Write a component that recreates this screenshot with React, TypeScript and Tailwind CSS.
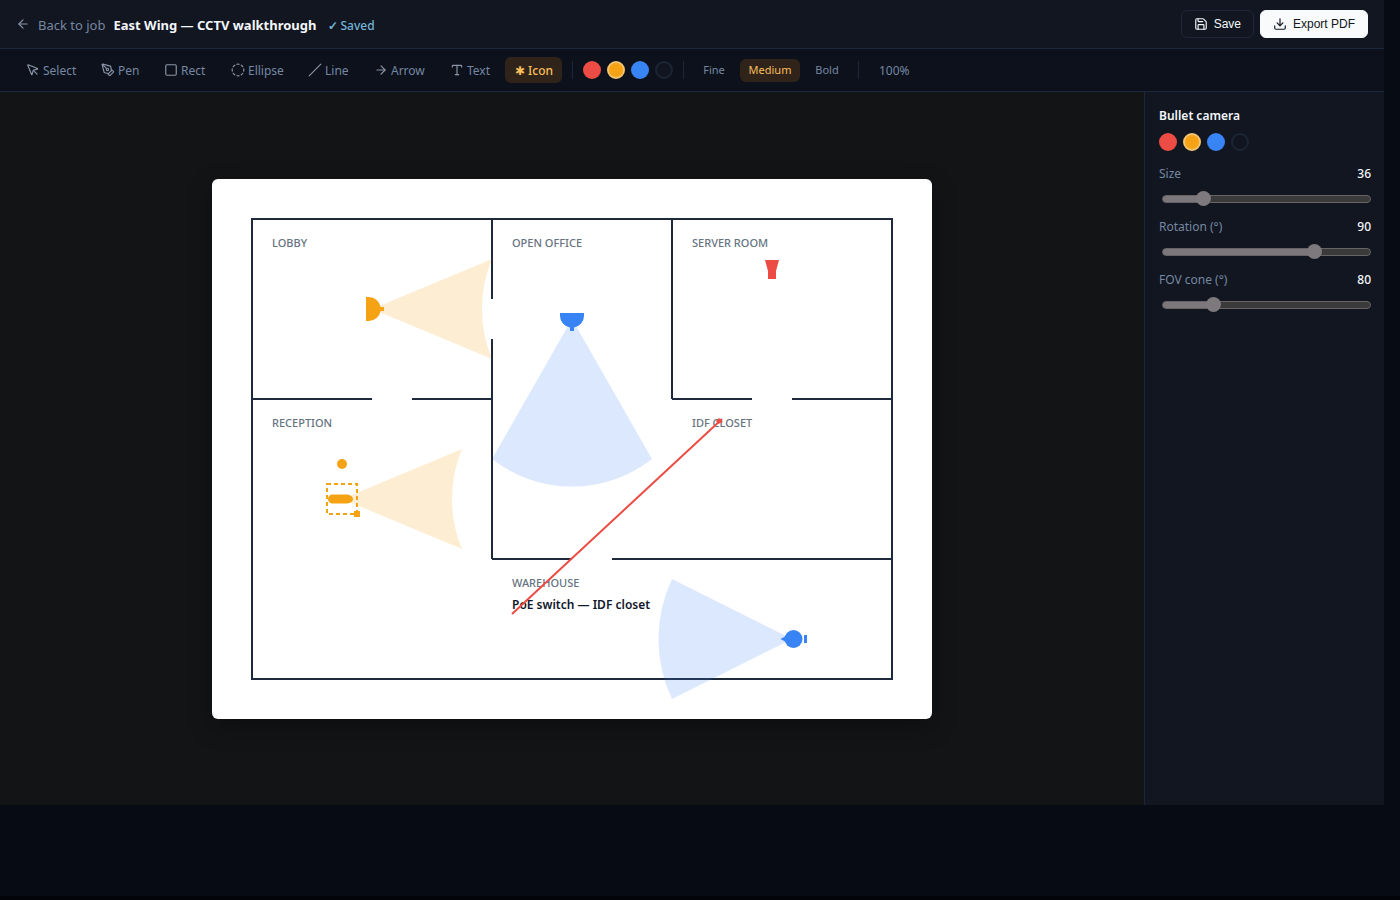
import { useState } from 'react';
import type { ReactNode } from 'react';
import {
  ArrowLeft,
  ArrowRight,
  CircleDashed,
  Download,
  MousePointer,
  PenTool,
  Save,
  Slash,
  Square,
  Type,
} from 'lucide-react';

type Tool = { name: string; icon: ReactNode; width: string };

const iconClass = 'size-3.5 shrink-0 text-[#8a95a5]';

const tools: Tool[] = [
  { name: 'Select', icon: <MousePointer className={iconClass} />, width: 'w-[71px]' },
  { name: 'Pen', icon: <PenTool className={iconClass} />, width: 'w-[59px]' },
  { name: 'Rect', icon: <Square className={iconClass} />, width: 'w-[63px]' },
  { name: 'Ellipse', icon: <CircleDashed className={iconClass} />, width: 'w-[73px]' },
  { name: 'Line', icon: <Slash className={iconClass} />, width: 'w-[62px]' },
  { name: 'Arrow', icon: <ArrowRight className={iconClass} />, width: 'w-[72px]' },
  { name: 'Text', icon: <Type className={iconClass} />, width: 'w-[61px]' },
  {
    name: 'Icon',
    icon: (
      <span aria-hidden="true" className="pt-0.5">
        ✱
      </span>
    ),
    width: 'w-[57px]',
  },
];

const colors = [
  { name: 'Red', fill: 'bg-[#ed4c45]' },
  { name: 'Amber', fill: 'bg-[#f5a314]' },
  { name: 'Blue', fill: 'bg-[#3884f4]' },
  { name: 'Black', fill: 'bg-[#111520]' },
];

const weights = [
  { name: 'Fine', width: 'w-10' },
  { name: 'Medium', width: 'w-[60px]' },
  { name: 'Bold', width: 'w-[42px]' },
];

function Swatches({ value, onChange }: { value: string; onChange: (name: string) => void }) {
  return (
    <div className="flex items-center gap-1.5">
      {colors.map((c) => {
        let border = 'border-transparent';
        if (c.name === 'Black') border = 'border-2 border-[#1c2536]';
        if (c.name === value) border = 'border-2 border-[#f3c471]';
        return (
          <button
            key={c.name}
            type="button"
            aria-label={c.name}
            aria-pressed={c.name === value}
            onClick={() => onChange(c.name)}
            className={`size-[18px] rounded-full ${c.fill} ${border}`}
          />
        );
      })}
    </div>
  );
}

function Divider() {
  return <div className="mx-1.5 h-[18px] w-px bg-[#1c273b]" />;
}

type SliderProps = { id: string; label: string; min: number; max: number; initial: number };

function Slider({ id, label, min, max, initial }: SliderProps) {
  const [value, setValue] = useState(initial);
  const pct = ((value - min) / (max - min)) * 100;
  return (
    <div className="mb-1 flex flex-col">
      <div className="flex h-5 items-center justify-between text-xs">
        <label htmlFor={id} className="text-[#7687a2]">
          {label}
        </label>
        <output htmlFor={id} className="font-medium text-[#f4f7fb]">
          {value}
        </output>
      </div>
      <div className="flex h-[29px] items-center pl-[3px]">
        <input
          id={id}
          type="range"
          min={min}
          max={max}
          value={value}
          onChange={(e) => setValue(Number(e.target.value))}
          style={{
            backgroundImage: `linear-gradient(to right, #7b777b ${pct}%, #3a3a3a ${pct}%)`,
          }}
          className="h-2 w-full appearance-none rounded-full border border-[#666466] [&::-webkit-slider-thumb]:size-[15px] [&::-webkit-slider-thumb]:appearance-none [&::-webkit-slider-thumb]:rounded-full [&::-webkit-slider-thumb]:bg-[#7d797d]"
        />
      </div>
    </div>
  );
}

function FloorPlan() {
  return (
    <svg
      viewBox="0 0 720 540"
      role="img"
      aria-label="East Wing floor plan"
      className="w-[720px] max-w-full rounded-md bg-white shadow-[0_8px_24px_rgba(0,0,0,0.3)]"
    >
      <g fill="none" stroke="#1e293b" strokeWidth="2">
        <rect x="40" y="40" width="640" height="460" />
        <path d="M280 40V120M280 160V380M460 40V220M40 220H160M200 220H280M460 220H540M580 220H680M280 380H360M400 380H680" />
      </g>

      <g fill="#667380" fontSize="11" fontWeight="500">
        <text x="60" y="68">LOBBY</text>
        <text x="300" y="68">OPEN OFFICE</text>
        <text x="480" y="68">SERVER ROOM</text>
        <text x="60" y="248">RECEPTION</text>
        <text x="480" y="248">IDF CLOSET</text>
        <text x="300" y="408">WAREHOUSE</text>
      </g>

      <text x="300" y="430" fontSize="12" fontWeight="600" fill="#0f172a">
        PoE switch — IDF closet
      </text>

      <g fill="#f59e0b" fillOpacity="0.18">
        <path d="M160 130L280 80A130 130 0 0 0 280 180Z" />
        <path d="M130 320L250 270A130 130 0 0 0 250 370Z" />
      </g>
      <g fill="#3b82f6" fillOpacity="0.18">
        <path d="M360 140L280 280A130 130 0 0 0 440 280Z" />
        <path d="M580 460L460 400A140 140 0 0 0 460 520Z" />
      </g>

      <g fill="#f5a314">
        <path d="M154 118H157A12 12 0 0 1 168.600 128H172V132H168.600A12 12 0 0 1 157 142H154Z" />
        <circle cx="130" cy="285" r="5" />
        <path d="M120.500 315.500H135.500Q141 316.500 141 320Q141 323.500 135.500 324.500H120.500A4.500 4.500 0 0 1 120.500 315.500Z" />
        <rect x="142" y="332" width="6" height="6" />
        <rect
          x="115"
          y="305"
          width="30"
          height="30"
          fill="none"
          stroke="#f5a314"
          strokeWidth="2"
          strokeDasharray="4 3"
        />
      </g>

      <g fill="#3884f4">
        <path d="M348 134H372V137A12 12 0 0 1 362 148.600V152H358V148.600A12 12 0 0 1 348 137Z" />
        <circle cx="581.500" cy="460" r="9" />
        <path d="M568.500 460L574 457V463Z" />
        <rect x="592" y="456" width="3" height="8" />
      </g>

      <path d="M553 81H567L564 92V100H556V92Z" fill="#ed4c45" />
      <path d="M300 435L510 240" stroke="#ed4c45" strokeWidth="2" />
      <path d="M507 239L511 243L506 245L504 242Z" fill="#ed4c45" />
    </svg>
  );
}

export default function App() {
  const [tool, setTool] = useState('Icon');
  const [color, setColor] = useState('Amber');
  const [weight, setWeight] = useState('Medium');

  return (
    <div className="min-h-screen border-b-4 border-[#02040a] bg-[#060b14] pr-4 font-['Noto_Sans',sans-serif] text-[#7687a2]">
      <div className="flex h-[calc(100vh-95px)] flex-col">
        <header className="flex h-[49px] shrink-0 items-center border-b border-[#1c273b] bg-[#111620] px-4">
          <a href="#job" className="flex items-center gap-2 text-[13px]">
            <ArrowLeft className={iconClass} />
            <span className="pt-[3px]">Back to job</span>
          </a>
          <h1 className="ml-2 pt-[3px] text-[13px] font-bold text-[#f4f7fb]">
            East Wing — CCTV walkthrough
          </h1>
          <span className="ml-3 flex gap-0.5 pt-[3px] text-xs font-medium text-[#74b5da]">
            <span className="font-bold">✓</span>
            <span>Saved</span>
          </span>
          <div className="ml-auto flex gap-1.5 font-['Liberation_Sans',sans-serif] text-xs font-medium">
            <button
              type="button"
              className="flex h-7 items-center gap-1.5 rounded-md border border-[#1c273b] px-3 text-[#f4f7fb]"
            >
              <Save className="size-3.5" />
              Save
            </button>
            <button
              type="button"
              className="flex h-7 items-center gap-1.5 rounded-md border border-[#f8fafc] bg-[#f8fafc] px-3 text-[#111620]"
            >
              <Download className="size-3.5" />
              Export PDF
            </button>
          </div>
        </header>

        <div
          role="toolbar"
          aria-label="Drawing tools"
          className="flex h-[43px] shrink-0 items-center gap-1 border-b border-[#1c273b] bg-[#0c111b] px-4"
        >
          {tools.map((t) => (
            <button
              key={t.name}
              type="button"
              aria-pressed={t.name === tool}
              onClick={() => setTool(t.name)}
              className={`flex h-[26px] items-center gap-[3px] rounded-md pl-2.5 text-xs ${t.width} ${
                t.name === tool ? 'bg-[#30241a] font-medium text-[#f9bf5b]' : ''
              }`}
            >
              {t.icon}
              <span className="pt-0.5">{t.name}</span>
            </button>
          ))}
          <Divider />
          <Swatches value={color} onChange={setColor} />
          <Divider />
          <div className="flex items-center gap-1.5">
            {weights.map((w) => (
              <button
                key={w.name}
                type="button"
                aria-pressed={w.name === weight}
                onClick={() => setWeight(w.name)}
                className={`h-[23px] rounded-md pt-px text-center text-[11px] ${w.width} ${
                  w.name === weight ? 'bg-[#30241a] text-[#f9bf5b]' : ''
                }`}
              >
                {w.name}
              </button>
            ))}
          </div>
          <Divider />
          <button type="button" className="px-2.5 pt-0.5 text-xs">
            100%
          </button>
        </div>

        <div className="flex min-h-0 flex-1">
          <main className="flex min-w-0 flex-1 items-center justify-center bg-[#131416]">
            <FloorPlan />
          </main>
          <aside className="w-60 shrink-0 border-l border-[#1c273b] bg-[#111620] pt-[15px] pr-[13px] pl-3.5">
            <h2 className="text-xs leading-[18px] font-semibold text-[#f4f7fb]">Bullet camera</h2>
            <div className="mt-2 mb-[13px]">
              <Swatches value={color} onChange={setColor} />
            </div>
            <Slider id="size" label="Size" min={12} max={150} initial={36} />
            <Slider id="rotation" label="Rotation (°)" min={-180} max={180} initial={90} />
            <Slider id="fov" label="FOV cone (°)" min={0} max={360} initial={80} />
          </aside>
        </div>
      </div>
    </div>
  );
}
